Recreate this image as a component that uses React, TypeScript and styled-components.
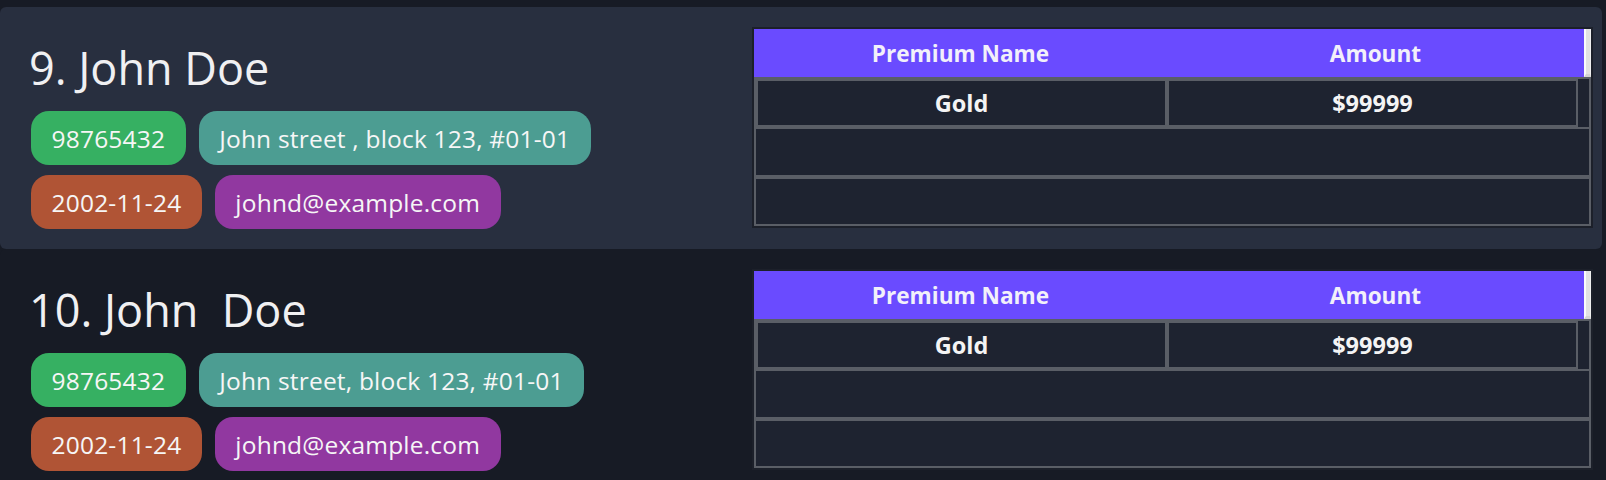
import React from "react";
import styled, { createGlobalStyle } from "styled-components";

const GlobalStyle = createGlobalStyle`
  html, body {
    margin: 0;
    padding: 0;
    background: #171b25;
    overflow: hidden;
  }
  body {
    font-family: "Open Sans", "Noto Sans", sans-serif;
  }
`;

const List = styled.div`
  display: flex;
  flex-direction: column;
  padding-top: 7px;
  padding-right: 4px;
`;

const Card = styled.div<{ $selected?: boolean }>`
  display: grid;
  grid-template-columns: 1fr 841px;
  padding: 20px 9px 20px 0;
  background: ${(p) => (p.$selected ? "#282f3f" : "#171b25")};
  border-radius: 6px;
`;

const Info = styled.div`
  display: flex;
  flex-direction: column;
  padding: 16px 0 0 31px;
`;

const Name = styled.h1`
  margin: 0 0 0 -2px;
  font-family: "Open Sans", "Noto Sans", sans-serif;
  font-weight: 400;
  font-size: 45px;
  line-height: 50px;
  color: #f0f0f2;
  white-space: pre;
`;

const TagList = styled.div`
  display: flex;
  flex-direction: column;
  gap: 10px;
  margin-top: 18px;
`;

const TagRow = styled.div`
  display: flex;
  gap: 13px;
`;

const Tag = styled.span<{ $bg: string }>`
  display: inline-flex;
  align-items: center;
  height: 54px;
  padding: 0 20.5px;
  border-radius: 18px;
  background: ${(p) => p.$bg};
  color: #f6f6f6;
  font-size: 24.5px;
  letter-spacing: 0.2px;
  white-space: pre;
`;

const Table = styled.div`
  display: flex;
  flex-direction: column;
  border: 2px solid #1c202a;
  background: #1e2330;
  align-self: start;
`;

const HeaderRow = styled.div`
  display: grid;
  grid-template-columns: 413px 417px 7px;
  height: 48px;
`;

const HeaderCell = styled.div`
  display: flex;
  align-items: center;
  justify-content: center;
  background: #6a4bff;
  color: #f2f0fa;
  font-weight: 700;
  font-size: 22.6px;
`;

const ScrollCorner = styled.div`
  background: #e2e2e2;
  border-left: 2px solid #fbfbfb;
  border-right: 1px solid #efefef;
  border-bottom: 3px solid #d4d4d4;
`;

const DataRow = styled.div`
  display: grid;
  grid-template-columns: 411px 411px 11px;
  border: 2px solid #5a5e66;
  border-bottom: none;
`;

const DataCell = styled.div`
  display: flex;
  align-items: center;
  justify-content: center;
  height: 48px;
  box-sizing: border-box;
  border: 2px solid #5a5e66;
  color: #f4f4f4;
  font-weight: 700;
  font-size: 23.5px;
`;

const Filler = styled.div``;

const EmptyRow = styled.div<{ $h: number }>`
  height: ${(p) => p.$h}px;
  box-sizing: border-box;
  border: 2px solid #5a5e66;
`;

type Person = {
  name: string;
  phone: string;
  address: string;
  birthday: string;
  email: string;
  selected?: boolean;
};

const people: Person[] = [
  {
    name: "9. John Doe",
    phone: "98765432",
    address: "John street , block 123, #01-01",
    birthday: "2002-11-24",
    email: "johnd@example.com",
    selected: true,
  },
  {
    name: "10. John  Doe",
    phone: "98765432",
    address: "John street, block 123, #01-01",
    birthday: "2002-11-24",
    email: "johnd@example.com",
  },
];

function PremiumTable() {
  return (
    <Table>
      <HeaderRow>
        <HeaderCell>Premium Name</HeaderCell>
        <HeaderCell>Amount</HeaderCell>
        <ScrollCorner />
      </HeaderRow>
      <DataRow>
        <DataCell>Gold</DataCell>
        <DataCell>$99999</DataCell>
        <Filler />
      </DataRow>
      <EmptyRow $h={50} />
      <EmptyRow $h={49} />
    </Table>
  );
}

export default function App() {
  return (
    <>
      <GlobalStyle />
      <List>
        {people.map((p) => (
          <Card key={p.name} $selected={p.selected}>
            <Info>
              <Name>{p.name}</Name>
              <TagList>
                <TagRow>
                  <Tag $bg="#36b062">{p.phone}</Tag>
                  <Tag $bg="#4c9d92">{p.address}</Tag>
                </TagRow>
                <TagRow>
                  <Tag $bg="#b05435">{p.birthday}</Tag>
                  <Tag $bg="#9138a0">{p.email}</Tag>
                </TagRow>
              </TagList>
            </Info>
            <PremiumTable />
          </Card>
        ))}
      </List>
    </>
  );
}
